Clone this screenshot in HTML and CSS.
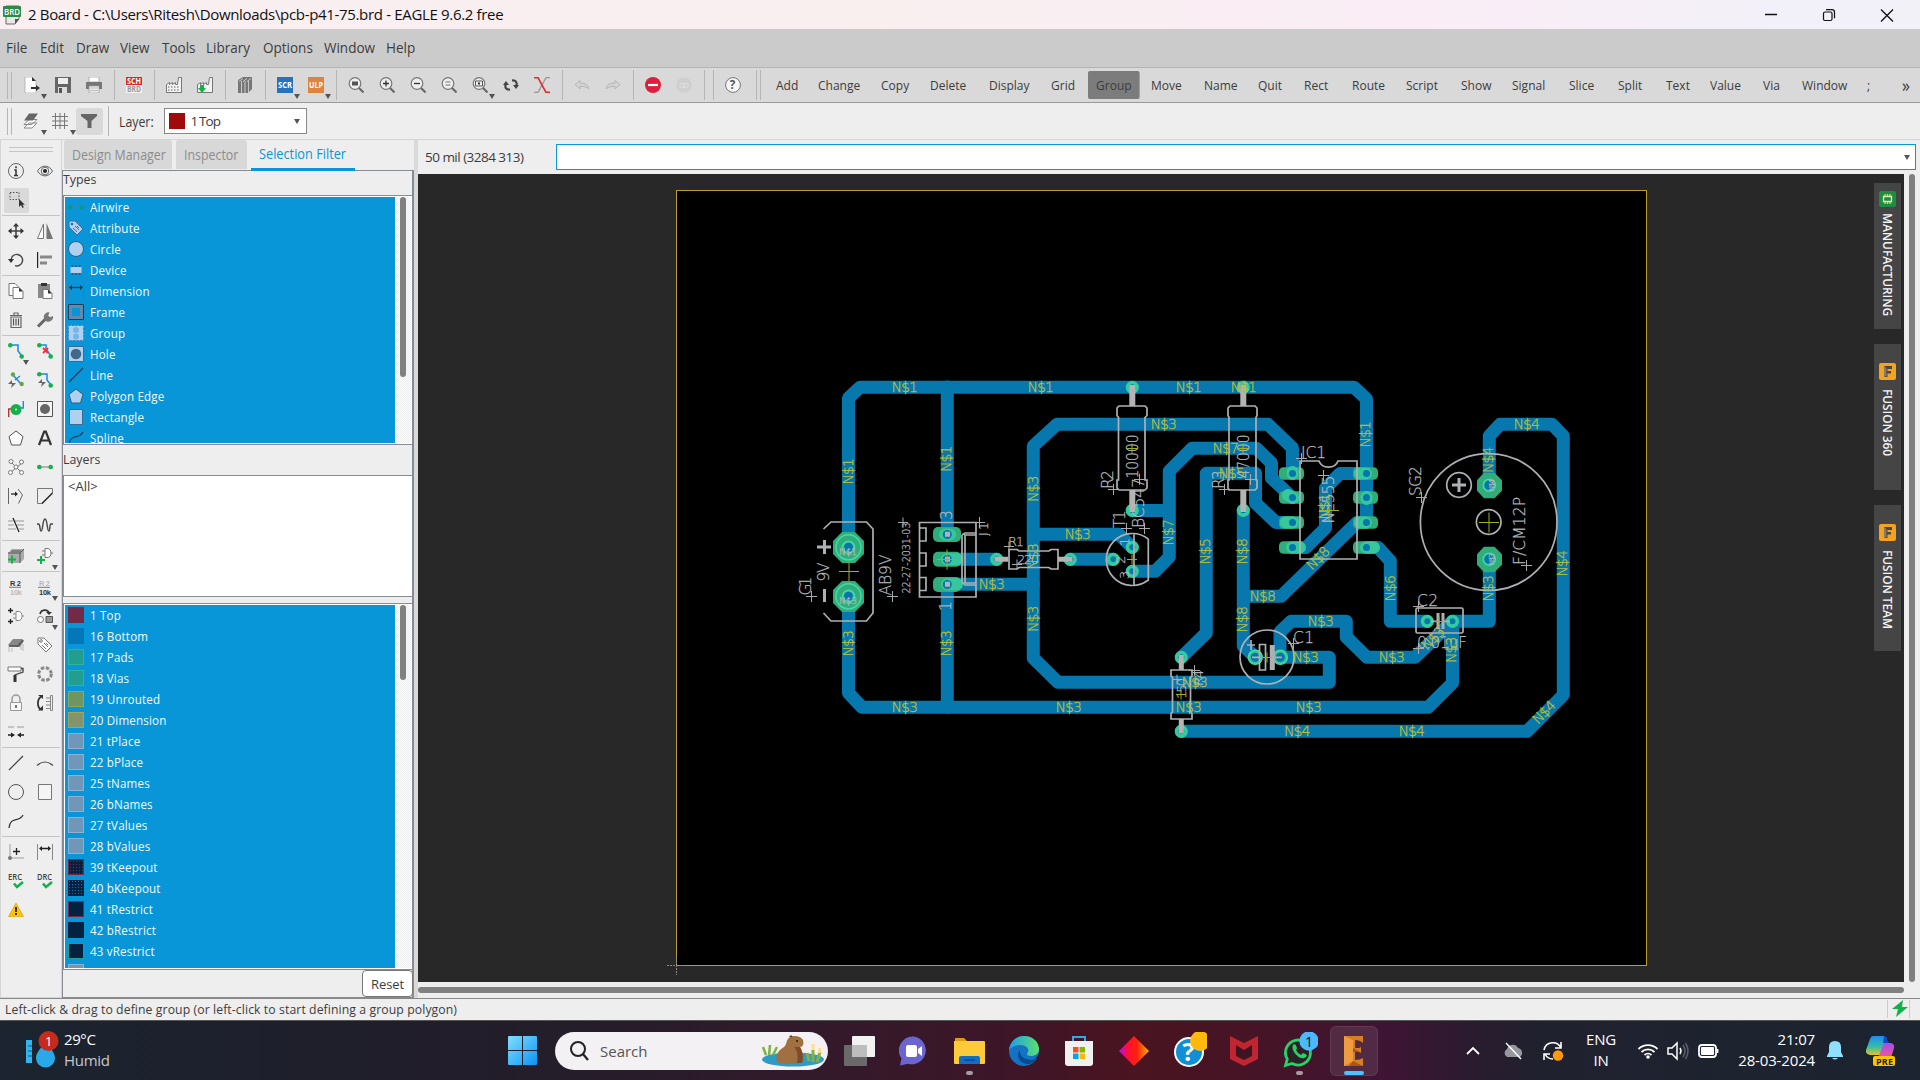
FILE: index.html
```html
<!DOCTYPE html>
<html lang="en">
<head>
<meta charset="utf-8">
<title>2 Board - EAGLE 9.6.2 free</title>
<link rel="stylesheet" href="styles.css">
</head>
<body>
<div class="app">

<header class="titlebar">
  <svg class="app-icon" width="19" height="20" viewBox="0 0 19 20"><path d="M3 1h13v13l-4 5H3z" fill="#e8e8e8" stroke="#666"/><path d="M12 19v-5h4z" fill="#555"/><rect width="18" height="11" y="1" rx="1" fill="#2b8a49"/><text x="1" y="10" font-size="9" font-weight="600" fill="#fff" textLength="16" lengthAdjust="spacingAndGlyphs">BRD</text></svg>
  <span class="title">2 Board - C:\Users\Ritesh\Downloads\pcb-p41-75.brd - EAGLE 9.6.2 free</span>
  <svg class="winctl" width="140" height="20" viewBox="1760 4 140 20"><path d="M1765 13.500h12M1881 8.500l12 12M1893 8.500l-12 12" stroke="#111" stroke-width="1.300" fill="none"/><rect x="1823.500" y="11" width="8.500" height="8.500" rx="1.500" fill="none" stroke="#111" stroke-width="1.200"/><path d="M1826 8.700h6a2.500 2.500 0 0 1 2.500 2.500v6" fill="none" stroke="#111" stroke-width="1.200"/></svg>
</header>

<nav class="menubar"><span>File</span><span>Edit</span><span>Draw</span><span>View</span><span>Tools</span><span>Library</span><span>Options</span><span>Window</span><span>Help</span></nav>

<div class="toolbar">
  <i class="handle"></i>
  <span class="tb drop"><svg viewBox="0 0 16 16"><path d="M1 0h7l4 4v12H1z" fill="#fff" stroke="#999" stroke-width=".6"/><path d="M8 0v4h4z" fill="#333"/><path d="M7 11h6" stroke="#333" stroke-width="2"/><path d="M12 8l4 3-4 3z" fill="#333"/></svg></span>
  <span class="tb"><svg viewBox="0 0 16 16"><path d="M0 0h16v16H0z" fill="#666"/><path d="M3 1h10v6H3z" fill="#eee"/><path d="M3 10h9v6H3z" fill="#ddd"/><path d="M4 11h3v5H4z" fill="#555"/></svg></span>
  <span class="tb"><svg viewBox="0 0 16 16"><path d="M3 0h10v5H3z" fill="#fff" stroke="#999" stroke-width=".7"/><path d="M0 5h16v7H0z" fill="#777"/><path d="M3 9h10v7H3z" fill="#eee" stroke="#999" stroke-width=".7"/><path d="M4 11h8M4 13.500h8" stroke="#bbb"/></svg></span>
  <i class="sep"></i>
  <span class="tb"><svg viewBox="0 0 16 16"><path d="M0 0h16v8H0z" fill="#e02323"/><path d="M0 8h16v8H0z" fill="#f3f3f3"/><text x="1" y="7" font-size="8" font-weight="700" fill="#fff" textLength="14" lengthAdjust="spacingAndGlyphs">SCH</text><text x="1" y="15" font-size="8" font-weight="700" fill="#999" textLength="14" lengthAdjust="spacingAndGlyphs">BRD</text></svg></span>
  <i class="sep"></i>
  <span class="tb"><svg viewBox="0 0 16 16"><path d="M.5 15.500v-8l3-2v2l3-2v2l3-2v2h2l1-7h3v15z" fill="#f2f2f2" stroke="#777"/><path d="M2 10h1.500M5 10h1.500M8 10h1.500M11 10h1.500M2 13h1.500M5 13h1.500M8 13h1.500M11 13h1.500" stroke="#666"/></svg></span>
  <span class="tb"><svg viewBox="0 0 16 16"><path d="M.5 15.500v-8l3-2v2l3-2v2l3-2v2h2l1-7h3v15z" fill="#f2f2f2" stroke="#777"/><path d="M3 8h4v3h2l-4 5-4-5h2z" fill="#14b14b"/></svg></span>
  <i class="sep"></i>
  <span class="tb"><svg viewBox="0 0 16 16"><path d="M1 3l5-3h9v12l-4 4H1z" fill="#777"/><path d="M4.500 4v12M8 4v12M11.500 4v12M2 4.500l4-3M6 4.500l4-3M10 4.500l4-3" stroke="#ddd" stroke-width=".8"/></svg></span>
  <i class="sep"></i>
  <span class="tb drop"><svg viewBox="0 0 16 16"><path d="M0 0h16v16H0z" fill="#2872bd"/><text x="1" y="11" font-size="9" font-weight="700" fill="#fff" textLength="14" lengthAdjust="spacingAndGlyphs">SCR</text></svg></span>
  <span class="tb drop"><svg viewBox="0 0 16 16"><path d="M0 0h16v16H0z" fill="#dc8440"/><text x="1" y="11" font-size="9" font-weight="700" fill="#fff" textLength="14" lengthAdjust="spacingAndGlyphs">ULP</text></svg></span>
  <i class="sep"></i>
  <span class="tb"><svg viewBox="0 0 16 16"><circle cx="7" cy="6.500" r="5.800" class="lens"/><path d="M11 11l4.500 4.500" class="grip"/><path d="M4 4.500h6v4H4z" fill="#555"/></svg></span>
  <span class="tb"><svg viewBox="0 0 16 16"><circle cx="7" cy="6.500" r="5.800" class="lens"/><path d="M11 11l4.500 4.500" class="grip"/><path d="M4 6.500h6M7 3.500v6" stroke="#333" stroke-width="1.300"/></svg></span>
  <span class="tb"><svg viewBox="0 0 16 16"><circle cx="7" cy="6.500" r="5.800" class="lens"/><path d="M11 11l4.500 4.500" class="grip"/><path d="M4 6.500h6" stroke="#333" stroke-width="1.300"/></svg></span>
  <span class="tb"><svg viewBox="0 0 16 16"><circle cx="7" cy="6.500" r="5.800" class="lens"/><path d="M11 11l4.500 4.500" class="grip"/><path d="M4.500 5h5M4.500 8h5" stroke="#777" stroke-width="1.200"/></svg></span>
  <span class="tb drop"><svg viewBox="0 0 16 16"><circle cx="7" cy="6.500" r="5.800" class="lens"/><path d="M11 11l4.500 4.500" class="grip"/><path d="M3.500 4h7v5h-7z" fill="none" stroke="#555"/><path d="M6 5.500h2v2H6z" fill="#333"/></svg></span>
  <span class="tb"><svg viewBox="0 0 16 16"><path d="M9 3.500c4-.5 5 2 4.500 5M7 12.500c-4 .5-5-2-4.500-5" fill="none" stroke="#444" stroke-width="2.200"/><path d="M10 8h6l-3 4zM0 8h6L3 4z" fill="#444"/></svg></span>
  <span class="tb"><svg viewBox="0 0 16 16"><path d="M16 .7h-4L4 15.300H0" fill="none" stroke="#999" stroke-width="1.300"/><path d="M0 .7h4l8 14.600h4" fill="none" stroke="#e22b2b" stroke-width="1.700"/></svg></span>
  <i class="sep"></i>
  <span class="tb"><svg viewBox="0 0 16 16"><path d="M1 7.500l5-4v2.500c6 0 8 2 9 6-2-2-5-3-9-2.500v2.500z" fill="#d3d3d3" stroke="#b5b5b5"/></svg></span>
  <span class="tb"><svg viewBox="0 0 16 16"><path d="M15 7.500l-5-4v2.500c-6 0-8 2-9 6 2-2 5-3 9-2.500v2.500z" fill="#d3d3d3" stroke="#b5b5b5"/></svg></span>
  <i class="sep"></i>
  <span class="tb"><svg viewBox="0 0 16 16"><circle cx="8" cy="8" r="8" fill="#de1f3c"/><path d="M3 8h10" stroke="#fff" stroke-width="2.200"/></svg></span>
  <span class="tb"><svg viewBox="0 0 16 16"><circle cx="8" cy="8" r="7.800" fill="#cfcfcf"/><text x="3" y="11" font-size="8" fill="#e4e4e4" textLength="10">GO</text></svg></span>
  <i class="sep"></i><i class="sep"></i>
  <span class="tb"><svg viewBox="0 0 16 16"><circle cx="8" cy="8" r="7.400" fill="#f6f6f6" stroke="#777"/><text x="4.700" y="12" font-size="11.500" font-weight="700" fill="#555">?</text></svg></span>
  <i class="handle h2"></i>
  <div class="cmds"><span>Add</span><span>Change</span><span>Copy</span><span>Delete</span><span>Display</span><span>Grid</span><span class="on">Group</span><span>Move</span><span>Name</span><span>Quit</span><span>Rect</span><span>Route</span><span>Script</span><span>Show</span><span>Signal</span><span>Slice</span><span>Split</span><span>Text</span><span>Value</span><span>Via</span><span>Window</span><span>;</span><span class="more">»</span></div>
</div>

<div class="toolbar2">
  <i class="handle"></i>
  <span class="tb drop"><svg viewBox="0 0 16 16"><path d="M1 15h8l5-5H6zM1 11.500h8l5-5H6z" fill="#fff" stroke="#888"/><path d="M1 7.500h9l5-7H6z" fill="#666"/></svg></span>
  <span class="tb drop"><svg viewBox="0 0 16 16"><path d="M0 3.500h16M0 8h16M0 12.500h16M3.500 0v16M8 0v16M12.500 0v16" stroke="#777"/></svg></span>
  <span class="tb pressed"><svg viewBox="0 0 16 16"><path d="M0 1h16v2l-5.500 5v7h-4V8L0 3z" fill="#666"/></svg></span>
  <i class="sep"></i>
  <label>Layer:</label>
  <div class="combo"><i></i><span>1 Top</span><b></b></div>
</div>

<main class="main">
<aside class="palette">
  <div class="grip-lines"></div>
  <div class="prow">
    <svg viewBox="0 0 16 16"><circle cx="8" cy="8" r="7.500" fill="none" stroke="#666"/><path d="M8 3.300v2M6.300 7H8v5.500M6 12.500h4" fill="none" stroke="#333" stroke-width="1.500"/></svg>
    <svg viewBox="0 0 16 16"><path d="M.5 8C4 1.500 12 1.500 15.500 8 12 14.500 4 14.500.5 8z" fill="none" stroke="#666"/><circle cx="8" cy="8" r="3.800" fill="none" stroke="#666"/><circle cx="8" cy="8" r="2" fill="#222"/></svg>
  </div>
  <div class="prow"><svg class="sel" viewBox="0 0 16 16"><path d="M1 .500h9v7H1z" fill="none" stroke="#555" stroke-dasharray="1.500 1.500"/><path d="M10 7v8l2-2 1.500 3 1.300-.8-1.300-2.400h2.300z" fill="#333"/></svg></div>
  <hr>
  <div class="prow">
    <svg viewBox="0 0 16 16"><path d="M8 2v12M2 8h12" stroke="#444" stroke-width="1.600"/><path d="M8 0l3 3.500H5zM8 16l3-3.500H5zM0 8l3.500-3v6zM16 8l-3.500-3v6z" fill="#333"/></svg>
    <svg viewBox="0 0 16 16"><path d="M6.500 1v14.500H.500z" fill="#fff" stroke="#777"/><path d="M9.500 0v16H16z" fill="#777"/></svg>
  </div>
  <div class="prow">
    <svg viewBox="0 0 16 16"><path d="M3 8a5.800 5.800 0 1 1 4 5.700" fill="none" stroke="#444" stroke-width="1.400"/><path d="M0 7h6l-3 4z" fill="#333"/></svg>
    <svg viewBox="0 0 16 16"><path d="M.6 0v16" stroke="#222" stroke-width="1.200"/><path d="M3 5h12M3 11h7" stroke="#888" stroke-width="3"/></svg>
  </div>
  <hr>
  <div class="prow">
    <svg viewBox="0 0 16 16"><path d="M1 .500h6l3 3v9H1z" fill="#fff" stroke="#777"/><path d="M5 4.500h6l4 4v7H5z" fill="#fff" stroke="#777"/><path d="M11 4.500v4h4z" fill="#333"/></svg>
    <svg viewBox="0 0 16 16"><path d="M1 1h12v14H1z" fill="#888"/><path d="M4 0h6v3H4z" fill="#333"/><path d="M6 6.500h5l4 4v5H6z" fill="#fff" stroke="#777"/><path d="M11 6.500v4h4z" fill="#333"/></svg>
  </div>
  <div class="prow">
    <svg viewBox="0 0 16 16"><path d="M2 3.500h12M6 3V1h4v2M3 5v10.500h10V5z" fill="none" stroke="#666" stroke-width="1.200"/><path d="M5.500 6.500v7M8 6.500v7M10.500 6.500v7" stroke="#555" stroke-width="1.200"/></svg>
    <svg viewBox="0 0 16 16"><path d="M1 14.500L9 6.500" stroke="#666" stroke-width="3"/><path d="M16 4l-3 1.200-1.800-1.700L12.500.5a4.700 4.700 0 1 0 3.500 3.500z" fill="#777"/></svg>
  </div>
  <hr>
  <div class="prow">
    <svg class="dd" viewBox="0 0 16 16"><path d="M2 2h8v6l4 5" fill="none" stroke="#168be6" stroke-width="1.500"/><circle cx="2.300" cy="2.300" r="2.300" fill="#14b04a"/><circle cx="13.700" cy="13.500" r="2.300" fill="#14b04a"/></svg>
    <svg viewBox="0 0 16 16"><path d="M2 2h7v4l5 7" fill="none" stroke="#168be6" stroke-width="1.500"/><circle cx="2.300" cy="2.300" r="2.300" fill="#14b04a"/><circle cx="13.700" cy="13.500" r="2.300" fill="#14b04a"/><path d="M6 5l5 5M11 5l-5 5" stroke="#f0303c" stroke-width="1.800"/></svg>
  </div>
  <div class="prow">
    <svg viewBox="0 0 16 16"><path d="M5 3l8 9M7 8l5-4" stroke="#168be6" stroke-width="1.500"/><circle cx="5" cy="2.500" r="2.200" fill="#6ba348"/><circle cx="13.700" cy="12" r="2.200" fill="#6ba348"/><path d="M4 8L0 12h4l-1 4 5-5H4z" fill="#666"/></svg>
    <svg viewBox="0 0 16 16"><path d="M2 2h8v6l4 5" fill="none" stroke="#168be6" stroke-width="1.500"/><circle cx="2.300" cy="2.300" r="2.300" fill="#14b04a"/><circle cx="13.700" cy="13.500" r="2.300" fill="#14b04a"/><path d="M5 7L1 11h4l-1 4 5-5H5z" fill="#666"/></svg>
  </div>
  <div class="prow">
    <svg viewBox="0 0 16 16"><path d="M.7 16V8H3" fill="none" stroke="#b33" stroke-width="1.400"/><path d="M15.300 0v7H13" fill="none" stroke="#168be6" stroke-width="1.400"/><circle cx="8" cy="8.500" r="5.500" fill="#14b04a"/><circle cx="8" cy="8.500" r="1" fill="#fff"/></svg>
    <svg viewBox="0 0 16 16"><path d="M.5 .500h15v15H.500z" fill="#f5f5f5" stroke="#555"/><circle cx="8" cy="8" r="5" fill="#666"/></svg>
  </div>
  <div class="prow">
    <svg viewBox="0 0 16 16"><path d="M8 1l7 5.500-2.500 8.500h-9L1 6.500z" fill="#fafafa" stroke="#555"/></svg>
    <svg viewBox="0 0 16 16"><path d="M2 15L7.200 1.500h1.600L14 15M4 10.500h8" fill="none" stroke="#333" stroke-width="2.200"/></svg>
  </div>
  <div class="prow">
    <svg viewBox="0 0 16 16"><path d="M2 2l12 12M14 4L2 14" stroke="#777"/><g fill="#fff" stroke="#777"><circle cx="3" cy="2.500" r="2"/><circle cx="13.500" cy="3" r="2"/><circle cx="8" cy="8" r="2"/><circle cx="2.500" cy="13.500" r="2"/><circle cx="13.500" cy="13.500" r="2"/></g></svg>
    <svg viewBox="0 0 16 16"><path d="M2 8h12" stroke="#999" stroke-width="1.400"/><circle cx="2.300" cy="8" r="2.300" fill="#14b04a"/><circle cx="13.700" cy="8" r="2.300" fill="#14b04a"/></svg>
  </div>
  <div class="prow">
    <svg viewBox="0 0 16 16"><path d="M.5 0v16M10 1l4.500 6-4 8.500" fill="none" stroke="#666"/><path d="M3 6h5" stroke="#222" stroke-width="1.300"/><path d="M7 3.500l3 2.500-3 2.500z" fill="#222"/></svg>
    <svg viewBox="0 0 16 16"><path d="M15.500 5V.500H.500v15h5" fill="none" stroke="#777"/><path d="M5 15.500L15.500 5" stroke="#222" stroke-width="1.500"/></svg>
  </div>
  <div class="prow">
    <svg viewBox="0 0 16 16"><path d="M0 4h5M7 4h9M0 8h6M9 8h7M0 12h8M11 12h5" stroke="#999"/><path d="M5 1l6 14" stroke="#222" stroke-width="1.300"/></svg>
    <svg viewBox="0 0 16 16"><path d="M0 7h1.500c2 0 1 7 2.700 7S5.500 2 8 2s2 12 3.800 12S12 7 14 7h2" fill="none" stroke="#444" stroke-width="1.400"/></svg>
  </div>
  <hr>
  <div class="prow">
    <svg viewBox="0 0 16 16"><path d="M0 5l4-4h12v10l-4 4H0z" fill="#aaa"/><path d="M0 5h12v10M12 5l4-4M3 3h10" stroke="#555" fill="none"/><path d="M4 7.500v8M0 11.500h8" stroke="#14b04a" stroke-width="2"/></svg>
    <svg class="dd" viewBox="0 0 16 16"><path d="M8 .500h2q4 0 4 4.500t-4 4.500H8zM5 3h3M5 7h3M14 5h2" fill="#fff" stroke="#777"/><path d="M4 8v8M0 12h8" stroke="#14b04a" stroke-width="2"/></svg>
  </div>
  <hr>
  <div class="prow">
    <svg viewBox="0 0 16 16"><text class="ic" x="2" y="6.500" textLength="11">R2</text><path d="M1 8.300h12" stroke="#777"/><text class="ic dim" x="2" y="15.500" textLength="12">10k</text></svg>
    <svg class="dd" viewBox="0 0 16 16"><text class="ic dim" x="2" y="6.500" textLength="11">R2</text><path d="M1 8.300h12" stroke="#777"/><text class="ic" x="2" y="15.500" textLength="12">10k</text></svg>
  </div>
  <div class="prow">
    <svg viewBox="0 0 16 16"><path d="M2.500 0v5M0 2.500h5M2.500 11v5M0 13.500h5" stroke="#222" stroke-width="1.300"/><path d="M8 3.500h2q4 0 4 4.500t-4 4.500H8zM5 6h3M5 10h3M14 8h2" fill="#fff" stroke="#888"/></svg>
    <svg class="dd" viewBox="0 0 16 16"><circle cx="3.500" cy="11.500" r="3" fill="#fff" stroke="#777"/><path d="M9 8.500h6.500v6H9z" fill="#999" stroke="#555"/><path d="M3 6c1-5 8-5 9-1" fill="none" stroke="#333" stroke-width="1.600"/><path d="M9 4h6l-3 3z" fill="#333"/></svg>
  </div>
  <div class="prow">
    <svg viewBox="0 0 16 16"><path d="M0 8l5-6h9l2 2-4 6H3z" fill="#888"/><path d="M1 9v6M4 11v4M13 9v4M15 7v7" stroke="#bbb"/><path d="M1 9h9l5-6" fill="none" stroke="#555" stroke-width="1.500"/></svg>
    <svg viewBox="0 0 16 16"><path d="M1 1h6l8 8-6 6L1 7z" fill="#fff" stroke="#777"/><circle cx="4" cy="4" r="1.300" fill="none" stroke="#777"/><path d="M7 6l4 4M5 8l4 4M9 6l2 2" stroke="#777"/></svg>
  </div>
  <div class="prow">
    <svg viewBox="0 0 16 16"><path d="M0 1h13v4H0z" fill="#fff" stroke="#777"/><path d="M13 2.500h2V6L7 9v3" fill="none" stroke="#444" stroke-width="1.300"/><path d="M7 9v7" stroke="#333" stroke-width="3"/></svg>
    <svg viewBox="0 0 16 16"><circle cx="8" cy="8" r="6.300" fill="none" stroke="#888" stroke-width="3" stroke-dasharray="3.400 1.550"/></svg>
  </div>
  <div class="prow">
    <svg viewBox="0 0 16 16"><path d="M4 7V4a4 4 0 0 1 8 0v3" fill="none" stroke="#999" stroke-width="1.500"/><path d="M2.500 7.500h11v8h-11z" fill="#f7f7f7" stroke="#999"/><path d="M8 10v3" stroke="#777" stroke-width="2"/></svg>
    <svg viewBox="0 0 16 16"><path d="M4 2C0 4 0 12 3.500 14" fill="none" stroke="#333" stroke-width="1.800"/><path d="M1 0h5v4zM1 15.500h5v-5z" fill="#333"/><path d="M13.500 .500h2v15h-2zM9 3h4M9 6.500h4M9 10h4M9 13.500h4" fill="none" stroke="#888"/></svg>
  </div>
  <div class="prow"><svg viewBox="0 0 16 16"><path d="M0 3h6M9 3h7" stroke="#999"/><path d="M0 11h4M12 11h4" stroke="#222" stroke-width="1.300"/><path d="M3 8.500l4 2.500-4 2.500zM13 8.500L9 11l4 2.500z" fill="#222"/></svg></div>
  <hr>
  <div class="prow">
    <svg viewBox="0 0 16 16"><path d="M1 15L15 1" stroke="#444" stroke-width="1.200"/></svg>
    <svg viewBox="0 0 16 16"><path d="M0 10.500Q8 3.500 16 10.500" fill="none" stroke="#444" stroke-width="1.200"/></svg>
  </div>
  <div class="prow">
    <svg viewBox="0 0 16 16"><circle cx="8" cy="8" r="7.500" fill="none" stroke="#555"/></svg>
    <svg viewBox="0 0 16 16"><path d="M1.500 .500h13v15h-13z" fill="#f5f5f5" stroke="#777"/></svg>
  </div>
  <div class="prow"><svg viewBox="0 0 16 16"><path d="M1 15C2 3 11 10 15 2" fill="none" stroke="#333" stroke-width="1.300"/></svg></div>
  <hr>
  <div class="prow">
    <svg viewBox="0 0 16 16"><path d="M2 0v14h14" fill="none" stroke="#bbb" stroke-width="1.500"/><circle cx="2" cy="14" r="2" fill="#777"/><path d="M8.500 4v7M5 7.500h7" stroke="#222" stroke-width="1.300"/></svg>
    <svg viewBox="0 0 16 16"><path d="M.5 0v16M15.500 0v16" stroke="#888"/><path d="M3 4.500h10" stroke="#222" stroke-width="1.500"/><path d="M2 4.500L5 2v5zM14 4.500L11 2v5z" fill="#222"/></svg>
  </div>
  <div class="prow">
    <svg viewBox="0 0 16 16"><text class="ic mid" x="0" y="7" textLength="14" lengthAdjust="spacingAndGlyphs">ERC</text><path d="M6 10.500l3 3.500 6-5" fill="none" stroke="#14b04a" stroke-width="2.600"/></svg>
    <svg viewBox="0 0 16 16"><text class="ic mid" x="0" y="7" textLength="15" lengthAdjust="spacingAndGlyphs">DRC</text><path d="M6 10.500l3 3.500 6-5" fill="none" stroke="#14b04a" stroke-width="2.600"/></svg>
  </div>
  <div class="prow"><svg viewBox="0 0 16 16"><path d="M8 1l7.500 13.500H.500z" fill="#fdc30a" stroke="#d99c00" stroke-width=".6"/><path d="M8 5v5M8 11v2" stroke="#222" stroke-width="1.800"/></svg></div>
</aside>

<section class="panel">
  <div class="tabs"><span class="t1"><b>Design Manager</b></span><span class="t2"><b>Inspector</b></span><span class="t3 active"><b>Selection Filter</b></span></div>
  <div class="panel-body">
    <h4 class="types">Types</h4>
    <div class="list list1">
      <ul>
        <li><svg viewBox="0 0 16 16"><path d="M2 8h12" stroke="#4a7fa5"/><circle cx="2.300" cy="8" r="2.300" fill="#0c9a83"/><circle cx="13.700" cy="8" r="2.300" fill="#0c9a83"/></svg><b>Airwire</b></li>
        <li><svg viewBox="0 0 16 16"><path d="M1 1h6l8 8-6 6L1 7z" fill="#b0d0ef" stroke="#3e6c92"/><circle cx="4" cy="4" r="1.300" fill="#2b6c9c"/><path d="M7 6l4 4M5 8l4 4M9 6l2 2" stroke="#3e6c92"/></svg><b>Attribute</b></li>
        <li><svg viewBox="0 0 16 16"><circle cx="8" cy="8" r="7.500" fill="#b0d0ef" stroke="#2f5d80"/></svg><b>Circle</b></li>
        <li><svg viewBox="0 0 16 16"><path d="M4.500 3v10M8 3v10M11.500 3v10" stroke="#355f80" stroke-width="2"/><path d="M2.500 5h11v6h-11z" fill="#b0d0ef"/></svg><b>Device</b></li>
        <li><svg viewBox="0 0 16 16"><path d="M.5 0v16M15.500 0v16" stroke="#4078a0"/><path d="M3 4.500h10" stroke="#123c5c" stroke-width="1.300"/><path d="M1 4.500L4 2v5zM15 4.500L12 2v5z" fill="#123c5c"/></svg><b>Dimension</b></li>
        <li><svg viewBox="0 0 16 16"><path d="M2.200 2.200h11.600v11.600H2.200z" fill="none" stroke="#6788aa" stroke-width="3.500"/><path d="M.5 .500h15v15H.500z" fill="none" stroke="#173f60"/></svg><b>Frame</b></li>
        <li><svg viewBox="0 0 16 16"><path d="M.5 .500h15v15H.500z" fill="#b0d0ef" stroke="#3e7fb5" stroke-dasharray="2 1.500"/><circle cx="8" cy="5" r="3" fill="#78b5e6"/><circle cx="8" cy="11.500" r="3" fill="#78b5e6"/></svg><b>Group</b></li>
        <li><svg viewBox="0 0 16 16"><path d="M.5 .500h15v15H.500z" fill="#b0d0ef" stroke="#3a6b92"/><circle cx="8" cy="8" r="5.300" fill="#44688a"/></svg><b>Hole</b></li>
        <li><svg viewBox="0 0 16 16"><path d="M1 15L15 1" stroke="#123c5c" stroke-width="1.200"/></svg><b>Line</b></li>
        <li><svg viewBox="0 0 16 16"><path d="M8 1l7 5.500-2.500 8.500h-9L1 6.500z" fill="#b0d0ef" stroke="#2f5d80"/></svg><b>Polygon Edge</b></li>
        <li><svg viewBox="0 0 16 16"><path d="M1.500 .500h13v15h-13z" fill="#b0d0ef" stroke="#3a6b92"/></svg><b>Rectangle</b></li>
        <li><svg viewBox="0 0 16 16"><path d="M1 15C2 3 11 10 15 2" fill="none" stroke="#123c5c" stroke-width="1.300"/></svg><b>Spline</b></li>
      </ul>
      <div class="scroll"><i></i></div>
    </div>
    <h4 class="layers">Layers</h4>
    <div class="allbox">&lt;All&gt;</div>
    <div class="list list2">
      <ul>
        <li><i class="sw l1"></i><b>1 Top</b></li>
        <li><i class="sw l16"></i><b>16 Bottom</b></li>
        <li><i class="sw l17"></i><b>17 Pads</b></li>
        <li><i class="sw l17"></i><b>18 Vias</b></li>
        <li><i class="sw l19"></i><b>19 Unrouted</b></li>
        <li><i class="sw l20"></i><b>20 Dimension</b></li>
        <li><i class="sw l21"></i><b>21 tPlace</b></li>
        <li><i class="sw l21"></i><b>22 bPlace</b></li>
        <li><i class="sw l21"></i><b>25 tNames</b></li>
        <li><i class="sw l21"></i><b>26 bNames</b></li>
        <li><i class="sw l21"></i><b>27 tValues</b></li>
        <li><i class="sw l21"></i><b>28 bValues</b></li>
        <li><i class="sw l39"></i><b>39 tKeepout</b></li>
        <li><i class="sw l40"></i><b>40 bKeepout</b></li>
        <li><i class="sw l41"></i><b>41 tRestrict</b></li>
        <li><i class="sw l42"></i><b>42 bRestrict</b></li>
        <li><i class="sw l43"></i><b>43 vRestrict</b></li>
        <li><i class="sw l21"></i></li>
      </ul>
      <div class="scroll"><i></i></div>
    </div>
    <button class="reset">Reset</button>
  </div>
</section>

<section class="work">
  <div class="cmdrow"><span class="coord">50 mil (3284 313)</span><div class="cmdline"><b></b></div></div>
  <div class="canvas-row">
    <div class="canvas">
    <svg class="pcb" width="1486" height="808" viewBox="418 174 1486 808">
      <rect x="676.500" y="190.500" width="970" height="775" fill="#000" stroke="#c39a2c"/>
      <path d="M667 965.500h19M676.500 956v19" stroke="#8a8a8a" stroke-dasharray="2 1"/>
      <g class="trace">
        <path d="M848.500 547V398L860 387.300H1354L1366.500 399V522"/>
        <path d="M947.300 387V534M947.300 584V707"/>
        <path d="M848.500 596V693L862 707.300H1428L1452.500 683V621.300H1489.300V559"/>
        <path d="M1292.500 473.500V448L1268 424.300H1057L1033.300 446V658L1058 682.300H1329.300V657.300H1280V632L1291 621.300H1346.300V637L1367 657.300H1415L1452.300 621.300"/>
        <path d="M1033.300 534.300H1119L1132.300 547.300M947 584.300H1033.300M947 559.300H996.700M1070.300 559.300H1113.300"/>
        <path d="M1132.300 510.500H1169.300M1132.300 571.300H1155L1169.300 557V471L1192 448.300H1256.500L1271.500 463V478L1292 497.500"/>
        <path d="M1181.300 657.300L1206.300 633V473.300H1255.500V503L1276 522.500H1292"/>
        <path d="M1243.300 510.500V646L1255.300 657.300M1243.300 596.300H1281L1357 522.500H1366"/>
        <path d="M1366.500 473.500H1340L1325.500 488V528L1306 547.500H1292"/>
        <path d="M1366 547.500H1378L1390.300 561V621.300H1427"/>
        <path d="M1489.300 485.300V436L1500 424.300H1552L1563.300 436V695L1527 731.300H1181.300"/>
      </g>
      <g class="oct">
        <path d="M842 532h13l9 9v13l-9 9h-13l-9-9v-13z"/>
        <path d="M842 581h13l9 9v13l-9 9h-13l-9-9v-13z"/>
        <path d="M1484 472.800h10.500l7.500 7.500v10.500l-7.500 7.500H1484l-7-7.500v-10.500z"/>
        <path d="M1484 546.800h10.500l7.500 7.500v10.500l-7.500 7.500H1484l-7-7.500v-10.500z"/>
      </g>
      <g class="slot">
        <rect x="933" y="527" width="28" height="15" rx="5"/><rect x="933" y="551.800" width="28" height="15" rx="5"/><rect x="933" y="577" width="28" height="15" rx="5"/>
        <rect x="1279" y="467.300" width="25" height="12.500" rx="4.500"/><rect x="1279" y="491.300" width="25" height="12.500" rx="4.500"/><rect x="1279" y="516.300" width="25" height="12.500" rx="4.500"/><rect x="1279" y="541.300" width="25" height="12.500" rx="4.500"/>
        <rect x="1353" y="467.300" width="25" height="12.500" rx="4.500"/><rect x="1353" y="491.300" width="25" height="12.500" rx="4.500"/><rect x="1353" y="516.300" width="25" height="12.500" rx="4.500"/><rect x="1353" y="541.300" width="25" height="12.500" rx="4.500"/>
      </g>
      <g class="slothi">
        <path d="M945 534.500h5M947 559.300h10M947 584.300h10M1292.500 472v2M1288 495l5 3M1286 522.500h7M1292 547.500h8M1360 473.500h6M1366.500 497v2M1360 522.500h6M1366 547.500h8"/>
      </g>
      <g class="ring">
        <circle cx="848.500" cy="547.300" r="12.500" fill="none"/><circle cx="848.500" cy="596.300" r="12.500" fill="none"/>
        <circle cx="848.500" cy="547.300" r="6"/><circle cx="848.500" cy="596.300" r="6"/>
        <circle cx="1489.300" cy="485.300" r="6"/><circle cx="1489.300" cy="559.300" r="6"/>
        <circle cx="1255.300" cy="657.300" r="7"/><circle cx="1280.300" cy="657.300" r="7"/>
      </g>
      <g class="via">
        <circle cx="1132.300" cy="387.300" r="4.800"/><circle cx="1132.300" cy="510.300" r="4.800"/><circle cx="1243.300" cy="387.300" r="4.800"/><circle cx="1243.300" cy="510.300" r="4.800"/>
        <circle cx="996.700" cy="559.300" r="4.800"/><circle cx="1070.300" cy="559.300" r="4.800"/><circle cx="1113.300" cy="559.300" r="4.800"/><circle cx="1132.300" cy="547.300" r="4.800"/><circle cx="1132.300" cy="571.300" r="4.800"/>
        <circle cx="1181.300" cy="657.300" r="4.800"/><circle cx="1181.300" cy="731.300" r="4.800"/><circle cx="1427.300" cy="621.300" r="4.800"/><circle cx="1452.500" cy="621.300" r="4.800"/>
      </g>
      <g class="drill">
        <circle cx="848.500" cy="547.300" r="4.500"/><circle cx="848.500" cy="596.300" r="4.500"/><circle cx="947.300" cy="534.500" r="4.500"/><circle cx="947.300" cy="559.300" r="4.500"/><circle cx="947.300" cy="584.500" r="4.500"/>
        <circle cx="1292.500" cy="473.500" r="3.500"/><circle cx="1292.500" cy="497.500" r="3.500"/><circle cx="1292.500" cy="522.500" r="3.500"/><circle cx="1292.500" cy="547.500" r="3.500"/>
        <circle cx="1366.500" cy="473.500" r="3.500"/><circle cx="1366.500" cy="497.500" r="3.500"/><circle cx="1366.500" cy="522.500" r="3.500"/><circle cx="1366.500" cy="547.500" r="3.500"/>
        <circle cx="1489.300" cy="485.300" r="5"/><circle cx="1489.300" cy="559.300" r="5"/><circle cx="1255.300" cy="657.300" r="4.500"/><circle cx="1280.300" cy="657.300" r="4.500"/>
      </g>
      <g class="lead">
        <path d="M1132.300 385V406M1132.300 490V512M1243.300 385V406M1243.300 490V512"/>
        <path class="thin" d="M994.500 559.300H1008M1058 559.300H1072.500M1181.300 655V670M1181.300 719V733.500"/>
        <path class="thin" d="M945 534.300h5M945 559.300h5M945 584.300h5"/>
      </g>
      <g class="silk">
        <path d="M823.500 529L831 522H866.500L873 529V613L866.500 621H831L823.500 613"/>
        <path class="bold" d="M817 547h14M824.500 540v14M824.500 589v13"/>
        <path d="M919.500 522.500H976V597H919.500zM920 528h6v13h-6M920 553h6v13h-6M920 577.500h6v13h-6M976 535H965V583H976M962 535v47l3 3h11M962 535l3-2h11" />
        <path d="M1009 549.500h8l2 1.500h30l2-1.500h7V569h-7l-2-1.500h-30l-2 1.500h-8z"/>
        <path d="M1119 406h26l2 2v7.500l-2 2V480h2v8l-2 2h-26l-2-2v-8h1.500V417.500L1117 415.500V408z"/>
        <path d="M1230 406h25l2 2v7.500l-1 2V480h1v8l-2 2h-26l-1-2v-8h1V417.500l-1-2V408z"/>
        <path d="M1171 670h21v6l-1.500 1.500V712l1.500 1.500v5.500h-21v-5.500l1.500-1.500V677.500L1171 676z"/>
        <path d="M1148.300 539V580A26 26 0 1 1 1148.300 539M1134 534V585"/>
        <path d="M1300 461h19a10 9 0 0 0 19 0h19V559h-57z"/>
        <circle cx="1267" cy="657" r="27"/>
        <path d="M1259.500 644.500h6v25.500h-6zM1247 645h8M1251 640v10M1252 657.300h7M1275 657.300h7"/>
        <path d="M1272.300 645v25" stroke-width="5"/>
        <rect x="1416" y="608" width="47" height="25" rx="1.500"/>
        <path d="M1438 613v16M1443 613v16" stroke-width="3"/><path d="M1431 621.300h6M1444 621.300h6"/>
        <circle cx="1488.700" cy="522" r="68.300"/><circle cx="1488.700" cy="522" r="12.300"/><circle cx="1459" cy="485" r="12.300"/>
        <path class="bold" d="M1452 485h14M1459 478v14"/>
      </g>
      <path class="cross" d="M806 596.500h11m-5.500-5.500v11M887 596.500h11m-5.500-5.500v11M898 522.500h10m-5-5v10M974 522.500h11m-5.500-5.500v11M1004 546.500h10m-5-5v10M1012 564.500h10m-5-5v10M1108 489.500h11m-5.500-5.500v11M1219 489.500h11m-5.500-5.500v11M1134 479.500h11m-5.500-5.500v11M1245 479.500h11m-5.500-5.500v11M1121 528.500h11m-5.500-5.500v11M1139 528.500h11m-5.500-5.500v11M1296 458.500h11m-5.500-5.500v11M1318 475.500h11m-5.500-5.500v11M1416 497.500h11m-5.500-5.500v11M1521 565.500h11m-5.500-5.500v11M1413 606.500h11m-5.500-5.500v11M1413 648.500h11m-5.500-5.500v11M1288 643.500h11m-5.500-5.500v11M1189 670.500h11m-5.500-5.500v11M1172 679.500h10m-5-5v10M1193 672.500h10"/>
      <g class="st">
        <text transform="translate(811 595.500) rotate(-90)" textLength="19">G1</text>
        <text transform="translate(829 581.500) rotate(-90)" textLength="19">9V</text>
        <text transform="translate(891 595.500) rotate(-90)" textLength="41">AB9V</text>
        <text class="s" transform="translate(910 593.500) rotate(-90)" textLength="71" lengthAdjust="spacingAndGlyphs">22-27-2031-03</text>
        <text class="m" transform="translate(988 536) rotate(-90)" textLength="14">J1</text>
        <text transform="translate(952 520) rotate(-90)" textLength="9">3</text>
        <text transform="translate(951 611) rotate(-90)" textLength="9">1</text>
        <text class="m" x="1008" y="546" textLength="16">R1</text>
        <text class="m" x="1017" y="564" textLength="22">220</text>
        <text transform="translate(1112.500 489) rotate(-90)" textLength="19">R2</text>
        <text transform="translate(1138 478.500) rotate(-90)" textLength="44" lengthAdjust="spacingAndGlyphs">10000</text>
        <text transform="translate(1144 528) rotate(-90)" textLength="50">BC547</text>
        <text transform="translate(1125 528) rotate(-90)" textLength="18">T1</text>
        <text class="m" transform="translate(1129 546) rotate(-90)">1</text>
        <text class="m" transform="translate(1125 564) rotate(-90)">2</text>
        <text class="m" transform="translate(1129 579) rotate(-90)">3</text>
        <text transform="translate(1223.500 489) rotate(-90)" textLength="19">R3</text>
        <text transform="translate(1249 478.500) rotate(-90)" textLength="44" lengthAdjust="spacingAndGlyphs">47000</text>
        <text class="m" transform="translate(1186 699) rotate(-90)" textLength="21">150</text>
        <text class="m" transform="translate(1203 686) rotate(-90)" textLength="16">R4</text>
        <text x="1301" y="458" textLength="25">IC1</text>
        <text transform="translate(1334 523.500) rotate(-90)" textLength="48">NE555</text>
        <text transform="translate(1420.500 496) rotate(-90)" textLength="30">SG2</text>
        <text transform="translate(1525 565) rotate(-90)" textLength="68">F/CM12P</text>
        <text x="1417" y="606" textLength="21">C2</text>
        <text x="1417" y="647.500" textLength="50">0.01uF</text>
        <text x="1293" y="643" textLength="21">C1</text>
        <text class="xs" x="839" y="555" textLength="18">N$1</text><text class="xs" x="839" y="604" textLength="18">N$3</text>
        <text class="xxs" transform="translate(1494 491) rotate(-90)" textLength="12">N$4</text><text class="xxs" transform="translate(1494 565) rotate(-90)" textLength="12">N$3</text>
      </g>
      <path class="org" d="M839 571.500h20m-10-10v20M937 559.500h20m-10-10v20M1127 448.500h10m-5-5v10M1238 448.500h10m-5-5v10M1127 559.500h10m-5-5v10M1319 510.500h20m-10-10v20M1479 522.500h20m-10-10v20M1262 657.500h10m-5-5v10M1434 621.500h10m-5-5v10M1176 694.500h10m-5-5v10"/>
      <g class="net">
        <text x="891.500" y="392.300">N$1</text><text x="1027.500" y="392.300">N$1</text><text x="1175.500" y="392.300">N$1</text><text x="1230.500" y="392.300">N$1</text>
        <text x="1150.500" y="429.300">N$3</text><text x="1212.500" y="453.300">N$7</text><text x="1218.500" y="478.300">N$5</text><text x="1064.500" y="539.300">N$3</text><text x="978.500" y="589.300">N$3</text>
        <text x="891.500" y="712.300">N$3</text><text x="1055.500" y="712.300">N$3</text><text x="1175.500" y="712.300">N$3</text><text x="1295.500" y="712.300">N$3</text><text x="1181.500" y="687.300">N$3</text>
        <text x="1284" y="736.300">N$4</text><text x="1398.500" y="736.300">N$4</text><text x="1249.500" y="601.300">N$8</text><text x="1307.500" y="626.300">N$3</text><text x="1292.500" y="662.300">N$3</text><text x="1378.500" y="662.300">N$3</text><text x="1513.500" y="429.300">N$4</text>
        <text transform="translate(853.300 484.500) rotate(-90)">N$1</text><text transform="translate(951.300 472) rotate(-90)">N$1</text><text transform="translate(1038.300 502) rotate(-90)">N$3</text><text transform="translate(1038.300 569.500) rotate(-90)">N$3</text><text transform="translate(1038.300 632) rotate(-90)">N$3</text>
        <text transform="translate(853.300 656.500) rotate(-90)">N$3</text><text transform="translate(951.300 656.500) rotate(-90)">N$3</text><text transform="translate(1173.300 545.500) rotate(-90)">N$7</text><text transform="translate(1210.300 564.500) rotate(-90)">N$5</text><text transform="translate(1247.300 564.500) rotate(-90)">N$8</text><text transform="translate(1247.300 632.500) rotate(-90)">N$8</text>
        <text transform="translate(1370.300 447.500) rotate(-90)">N$1</text><text transform="translate(1395.300 601.500) rotate(-90)">N$6</text><text transform="translate(1493.300 601.500) rotate(-90)">N$3</text><text transform="translate(1493.300 473) rotate(-90)">N$4</text><text transform="translate(1567.300 576.500) rotate(-90)">N$4</text><text transform="translate(1456.300 663) rotate(-90)">N$3</text><text transform="translate(1329 519.500) rotate(-90)">N$1</text>
        <text transform="translate(1312 571) rotate(-45)">N$8</text><text transform="translate(1538 725) rotate(-45)">N$4</text><text transform="translate(1427 651) rotate(-45)">N$3</text>
      </g>
    </svg>
    <div class="sidetabs">
      <div class="st1"><svg width="17" height="16" viewBox="0 0 17 16"><rect width="17" height="16" rx="2" fill="#1d8d45"/><path d="M6 3v10M8.500 3v10M11 3v10" stroke="#e5d43b" stroke-width="1.300"/><path d="M4.500 5.500h8v5h-8z" fill="#1d8d45" stroke="#d9f0b0" stroke-width="1.300"/></svg><b>MANUFACTURING</b></div>
      <div class="st2"><svg width="17" height="17" viewBox="0 0 17 17"><rect width="17" height="17" rx="2" fill="#f5a21f"/><path d="M5 3h8v3H8.500v2H12v2.500H8.500V14H5z" fill="#4c4640"/><path d="M5 3l2.500 2v8L5 14z" fill="#8a7a65"/></svg><b>FUSION 360</b></div>
      <div class="st3"><svg width="17" height="17" viewBox="0 0 17 17"><rect width="17" height="17" rx="2" fill="#f5a21f"/><path d="M5 3h8v3H8.500v2H12v2.500H8.500V14H5z" fill="#4c4640"/><path d="M5 3l2.500 2v8L5 14z" fill="#8a7a65"/></svg><b>FUSION TEAM</b></div>
    </div>
    </div>
    <div class="vscroll"></div>
  </div>
  <div class="hscroll"></div>
</section>
</main>

<footer class="status"><span>Left-click &amp; drag to define group (or left-click to start defining a group polygon)</span><div class="bolt"><svg width="16" height="17" viewBox="0 0 16 17"><path d="M11 0L0 9h6l-2 8L16 7h-6z" fill="#14b04a"/></svg></div></footer>

<div class="taskbar">
  <div class="weather">
    <svg width="36" height="40" viewBox="24 1028 36 40"><rect x="26" y="1037" width="6" height="23" fill="#32b5ef"/><path d="M28 1043h4M28 1048h4M28 1053h4" stroke="#0b5a8d"/><path d="M45.500 1038c3 6 9.500 11 9.500 17a9.500 9.500 0 0 1-19 0c0-6 6.500-11 9.500-17z" fill="#29a9ea"/><circle cx="48.500" cy="1038" r="10" fill="#c42b1c"/><text x="45" y="1043" font-size="13" fill="#fff">1</text></svg>
    <p>29°C<br><em>Humid</em></p>
  </div>
  <svg class="winlogo" width="29" height="29" viewBox="0 0 29 29"><defs><linearGradient id="wg" x2="1" y2="1"><stop stop-color="#7fe0ff"/><stop offset="1" stop-color="#0a93f5"/></linearGradient></defs><path d="M0 1q0-1 1-1h13v14H0zM15 0h13q1 0 1 1v13H15zM0 15h14v14H1q-1 0-1-1zM15 15h14v13q0 1-1 1H15z" fill="url(#wg)"/></svg>
  <div class="search"><svg width="20" height="20" viewBox="0 0 20 20"><circle cx="9" cy="8" r="7" fill="none" stroke="#222" stroke-width="2"/><path d="M14 13l5 6" stroke="#222" stroke-width="2.200"/></svg><span>Search</span>
    <svg class="capy" width="64" height="32" viewBox="760 1036 64 32"><ellipse cx="793" cy="1060.500" rx="31" ry="7" fill="#2c9cc4"/><path d="M766 1056l-3-8M769 1056l1-10M773 1056l4-8" stroke="#7cb342" stroke-width="2.500"/><path d="M777 1063c-2-8 2-12 7-15 3-2 2-8 6-10 4-2 11-1 13 3 1 4 0 7-3 7 3 5 4 10 2 15-6 3-20 3-25 0z" fill="#a06f42"/><path d="M794 1048c4 4 4 10 3 16h5c2-5 1-10-2-16z" fill="#7a4e2b"/><circle cx="797" cy="1042" r="1" fill="#2b1a0c"/><path d="M789 1038l2-2 2 2z" fill="#5a3a1c"/><path d="M813 1063v-12M817 1063l3-10M809 1062l-2-8" stroke="#8cae3a" stroke-width="3"/><path d="M813 1051v-6M819 1054l1-5" stroke="#ffe082" stroke-width="3"/></svg>
  </div>
  <div class="apps">
    <span><svg width="31" height="30" viewBox="0 0 31 30"><rect x="0" y="9" width="23" height="21" rx="1" fill="#6a6a6a"/><rect x="8" y="0" width="23" height="21" rx="1" fill="#f2f2f2"/><path d="M8 9h15v12H8z" fill="#bdbdbd"/></svg></span>
    <span><svg width="30" height="30" viewBox="0 0 30 30"><path d="M15 .500a14 14 0 1 1-6 27.300L1 29.500l1.500-7A14 14 0 0 1 15 .500z" fill="#6a65d0"/><rect x="7" y="9" width="11" height="12" rx="2" fill="#fff"/><path d="M19 13l4-3v10l-4-3z" fill="#fff"/></svg></span>
    <span class="run"><svg width="31" height="29" viewBox="0 0 31 29"><path d="M1 2h9l4 4h-13z" fill="#dc9a0c"/><path d="M0 5h30q1 0 1 1v21q0 1-1 1H1q-1 0-1-1z" fill="#fdca3b"/><path d="M5 28v-6q0-2 2-2h17q2 0 2 2v6z" fill="#0f6fc5"/><path d="M10 24h11" stroke="#064a8e" stroke-width="1.500"/></svg></span>
    <span><svg width="30" height="30" viewBox="0 0 30 30"><defs><linearGradient id="eg" x2="1"><stop stop-color="#1e9de8"/><stop offset="1" stop-color="#5be070"/></linearGradient></defs><circle cx="15" cy="15" r="15" fill="#1272c4"/><path d="M30 13c1 4-1 8-4 9l5 2V12z" fill="#3c1727"/><path d="M0 14C1 5 8 0 15 0c9 0 15 6 15 13 0 5-4 7-8 7-3 0-4-1-4-2s2-2 1-5C17 8 6 7 0 14z" fill="url(#eg)"/><path d="M11 14c-5 6 0 15 10 14 3-1 6-3 8-6-8 4-19 1-18-8z" fill="#0b4a91"/></svg></span>
    <span><svg width="30" height="30" viewBox="0 0 30 30"><path d="M9 6V1h12v5" fill="none" stroke="#35a7e8" stroke-width="2"/><path d="M1 5h28v22q0 3-3 3H4q-3 0-3-3z" fill="#f0f0f0"/><path d="M9 11h5.500v5.500H9z" fill="#f25022"/><path d="M15.500 11H21v5.500h-5.500z" fill="#7fba00"/><path d="M9 17.500h5.500V23H9z" fill="#00a4ef"/><path d="M15.500 17.500H21V23h-5.500z" fill="#ffb900"/></svg></span>
    <span><svg width="30" height="30" viewBox="0 0 30 30"><defs><linearGradient id="dg" x2="1"><stop stop-color="#b90aff"/><stop offset=".3" stop-color="#ff1030"/><stop offset=".6" stop-color="#ff2010"/><stop offset="1" stop-color="#ffb000"/></linearGradient></defs><path d="M15 0l15 15-15 15L0 15z" fill="url(#dg)"/></svg></span>
    <span><svg class="help" width="36" height="38" viewBox="-4 -5 36 38"><circle cx="14" cy="15" r="14" fill="#0f8fd6" stroke="#fff" stroke-width="2"/><text x="7.500" y="24" font-size="25" font-weight="700" fill="#fff">?</text><circle cx="25" cy="4" r="10" fill="#ffb90c"/></svg></span>
    <span><svg width="28" height="30" viewBox="0 0 28 30"><path d="M0 0l14 7L28 0v23l-14 7-14-7z" fill="#c12530"/><path d="M6 9l8 5 8-5v11l-8 4-8-4z" fill="#3f1422"/></svg></span>
    <span class="run"><svg width="38" height="38" viewBox="-4 -5 38 38"><path d="M1.500 28.500l1.800-6.500A12.500 12.500 0 1 1 8 26.500z" fill="#2e2028" stroke="#25d366" stroke-width="2.800"/><path d="M9 8c2-2 3 0 4 3l-1 2c1 2 3 4 5 5l2-2c3 1 5 2 3 4-5 5-16-6-13-12z" fill="#25d366"/><circle cx="25" cy="4" r="9.700" fill="#4cb8ff"/><text x="21" y="9.500" font-size="14" fill="#111">1</text></svg></span>
    <span class="active"><svg width="20" height="30" viewBox="0 0 20 30"><path d="M0 0h19v7q-3-3-8-3v8h4q2 0 2-2v7q-1-1-3-1h-3v8q5 0 8-2v8H0z" fill="#d87f26"/><path d="M0 0l9 4v21l-9 5z" fill="#ee9b42"/><path d="M9 12l7 4H9zM9 25l10 5H5z" fill="#a85712"/></svg></span>
  </div>
  <svg class="tray" width="110" height="40" viewBox="1465 1030 110 40"><path d="M1467 1053l6-6 6 6" fill="none" stroke="#fff" stroke-width="1.800"/><path d="M1507 1056a4.500 4.500 0 0 1 0-8 6 6 0 0 1 11-1 5 5 0 0 1 2 9z" fill="#96989e"/><path d="M1506 1042l15 16" stroke="#fff" stroke-width="1.500"/><path d="M1544 1049a9 9 0 0 1 17-2M1561 1041v6h-6M1553 1058a9 9 0 0 1-8-5M1544 1059v-6h6" fill="none" stroke="#fff" stroke-width="1.600"/><circle cx="1558" cy="1054.500" r="5.200" fill="#ff9a0c"/></svg>
  <p class="lang">ENG<br>IN</p>
  <svg class="tray2" width="84" height="30" viewBox="1636 1035 84 30"><g fill="none" stroke="#fff" stroke-width="1.800"><path d="M1638.500 1048a13.500 13.500 0 0 1 19 0M1641.500 1051a9.500 9.500 0 0 1 13 0M1644.500 1054a5 5 0 0 1 7 0"/><path d="M1668 1047h4l5-5v16l-5-5h-4zM1680 1047q2 3 0 6" stroke-width="1.500"/><path d="M1683 1044q4 6 0 12M1685.500 1042q5 8 0 16" stroke="#5a606b" stroke-width="1.500"/><rect x="1699" y="1044" width="17" height="12" rx="3"/></g><circle cx="1648" cy="1056" r="1.800" fill="#fff"/><rect x="1701" y="1046" width="13" height="8" rx="1" fill="#fff"/><path d="M1717.500 1048v4" stroke="#fff" stroke-width="1.800"/></svg>
  <p class="clock">21:07<br>28-03-2024</p>
  <svg class="bell" width="16" height="19" viewBox="0 0 16 19"><path d="M8 0q6 0 6 6v5l2 4v1H0v-1l2-4V6q0-6 6-6zM5 17h6q-3 3-6 0z" fill="#8fe0ff"/></svg>
  <svg class="copilot" width="30" height="30" viewBox="0 0 30 30"><defs><linearGradient id="cg" y2="1" x2="0"><stop stop-color="#1b8cf0"/><stop offset=".6" stop-color="#39c0a0"/><stop offset="1" stop-color="#f0c020"/></linearGradient><linearGradient id="ch" y2="1" x2="0"><stop stop-color="#a64df0"/><stop offset="1" stop-color="#f25590"/></linearGradient></defs><path d="M7 0h11l3 2-7 17H4q-5-1-4-5L4 3q1-3 3-3z" fill="url(#cg)"/><path d="M18 0q3 0 3 4l2 3h-6z" fill="#1746c9"/><path d="M18 7h7q4 1 3 5l-3 10H12z" fill="url(#ch)"/><rect x="7" y="20" width="22" height="10" rx="2" fill="#ffc20c"/><text x="10" y="28.500" font-size="9" font-weight="700" fill="#222" textLength="17">PRE</text></svg>
</div>
</div>
</body>
</html>
```
FILE: styles.css
```css
* { box-sizing: border-box; }
body { margin: 0; font-family: "Open Sans", "Noto Sans", sans-serif; font-size: 13px; color: #3c3c3c; }
b, em, i { font-weight: inherit; font-style: normal; }
svg { display: block; }
.app { width: 1920px; height: 1080px; display: flex; flex-direction: column; overflow: hidden; background: #eee; }

.titlebar { height: 29px; display: flex; align-items: center; background: linear-gradient(90deg, #faeef1, #f9efef 46%, #faedf6 75%, #f2f0f8 92%, #f3f1f8); flex: none; padding-left: 3px; }
.app-icon { margin-right: 6px; flex: none; }
.title { width: 1732px; flex: none; font-size: 15px; line-height: 20px; padding-bottom: 2px; color: #111; white-space: nowrap; letter-spacing: -.33px; }
.winctl { flex: none; }
.menubar { height: 39px; flex: none; display: grid; grid-template-columns: 34px 36px 44px 42px 44px 57px 61px 62px 40px; align-items: center; padding: 0 0 3px 6px; background: #cbcbcb; border-bottom: 1px solid #b3b3b3; font-size: 15px; }
.menubar span { transform: scaleX(.9); transform-origin: left; }

.toolbar { height: 35px; flex: none; display: flex; align-items: center; background: #d9d9d9; border-bottom: 1px solid #999; padding-left: 7px; }
.handle { width: 5px; height: 27px; border: solid #b5b5b5; border-width: 0 1px; margin-right: 4.500px; flex: none; }
.h2 { margin: 0 15px 0 7.500px; height: 30px; }
.tb { width: 31px; height: 30px; display: flex; align-items: center; justify-content: center; flex: none; position: relative; }
.tb svg { width: 16px; height: 16px; }
.drop::after { content: ""; position: absolute; left: 24px; top: 24px; border: solid transparent; border-width: 5px 3px 0; border-top-color: #555; }
.sep { width: 9px; height: 30px; flex: none; border-left: 1px solid #b5b5b5; margin-left: 4px; margin-right: -4px; }
.lens { fill: #eee; stroke: #777; stroke-width: 1.200; }
.grip { stroke: #666; stroke-width: 2; }
.cmds { display: grid; grid-template-columns: 42.400px 63px 48.500px 59px 62.500px 45px 55px 52.500px 54.500px 46px 47.500px 54.500px 55px 51px 57px 49px 48px 44px 53px 39px 65px 35px 16px; font-size: 13.500px; align-items: center; }
.cmds span { justify-self: start; transform: scaleX(.89); transform-origin: left; line-height: 28px; white-space: nowrap; }
.cmds .on { background: #7c7c7c; border-radius: 2px; padding: 0 9px; margin-left: -8px; }
.cmds .more { font-size: 18px; line-height: 20px; }

.toolbar2 { height: 37px; flex: none; display: flex; align-items: center; border-bottom: 1px solid #d5d5d5; padding: 0 0 0 7px; }
.toolbar2 .tb { width: 29px; }
.toolbar2 .pressed { width: 27px; height: 27px; background: #d9d9d9; border-radius: 3px; margin-left: 1px; }
.toolbar2 .sep { margin-left: 5px; margin-right: 2px; }
.toolbar2 label { width: 45px; transform: scaleX(.88); transform-origin: left; font-size: 14px; }
.combo { width: 143px; height: 26px; border: 1px solid #888; background: #fff; display: flex; align-items: center; padding-left: 4px; }
.combo i { width: 16px; height: 16px; background: #a00a0a; margin-right: 6px; }
.combo span { width: 103px; letter-spacing: -.9px; font-size: 13.500px; word-spacing: -1px; }
.combo b, .cmdline b { border: solid transparent; border-width: 5px 3px 0; border-top-color: #555; }

.main { height: 858px; flex: none; display: flex; }
.palette { width: 62px; flex: none; border: 1px solid #d5d5d5; border-top: 0; padding-top: 7px; }
.grip-lines { height: 5px; width: 44px; margin: 0 0 5px 8px; border: solid #c5c5c5; border-width: 1px 0; }
.prow { height: 29px; display: grid; grid-template-columns: 29px 29px; padding-top: 6px; position: relative; }
.prow svg { width: 16px; height: 16px; margin-left: 7px; overflow: visible; }
.prow .sel { width: 25px; height: 25px; padding: 4px 4px 5px 5px; margin: -4px 0 0 3px; background: #d9d9d9; border-radius: 2px; }
.palette hr { border: 0; height: 1px; background: #c5c5c5; margin: 0 1px 1px; }
.prow:has(.dd)::after { content: ""; position: absolute; left: 51px; top: 23px; border: solid transparent; border-width: 5px 3px 0; border-top-color: #555; }
.prow:has(.dd:first-child)::after { left: 22px; }
.ic { font: 700 7.500px "Liberation Sans", sans-serif; fill: #333; }
.ic.dim { fill: #bbb; }
.ic.mid { fill: #444; font: 600 9.500px "Open Sans", sans-serif; }

.panel { width: 352px; flex: none; display: flex; flex-direction: column; }
.tabs { height: 30px; display: flex; align-items: stretch; flex: none; padding-left: 2px; font-size: 14px; color: #8c8c8c; }
.tabs span { background: #d8d8d8; border-radius: 3px 3px 0 0; margin-right: 4px; display: flex; align-items: center; white-space: nowrap; padding: 0 0 1px 7.500px; height: 29px; }
.tabs b { transform: scaleX(.885); transform-origin: left; }
.t1 { width: 108px; } .t2 { width: 71px; } .t3 { width: 104px; }
.tabs .active { background: none; color: #0896d9; border-bottom: 3px solid #0896d9; height: 31px; border-radius: 0; z-index: 1; }
.tabs .active b { transform: scaleX(.91); }
.panel-body { flex: 1; border: 1px solid #878c94; border-right-width: 2px; min-height: 0; }
h4 { margin: 0; font-weight: 400; font-size: 13px; line-height: 17px; transform: scaleX(.95); transform-origin: left; }
.types { height: 24px; }
.layers { height: 30px; padding-top: 6px; }
.list { border: 1px solid #878c94; background: #fff; padding: 1px; display: flex; width: 350px; }
.list1 { height: 250px; }
.list2 { height: 367px; margin-top: 6px; }
ul { list-style: none; margin: 0; padding: 0 0 0 3px; width: 330px; background: #0896d9; overflow: hidden; color: #f2faff; }
li { height: 21px; display: flex; align-items: center; font-size: 13px; letter-spacing: .2px; }
li:first-child { margin-top: -1px; }
li svg, .sw { width: 16px; height: 16px; margin-right: 6px; }
li b { transform: scaleX(.89); transform-origin: left; white-space: nowrap; }
.scroll { flex: 1; padding-left: 5px; background: repeating-conic-gradient(#fff 0 25%, #ececec 0 50%) 0 0 / 2px 2px; }
.scroll i { display: block; width: 6px; background: #808080; border-radius: 3px; height: 180px; }
.list2 .scroll i { height: 75px; }
.allbox { height: 122px; border: 1px solid #878c94; background: #fff; padding: 1px 4px; width: 350px; }
.reset { display: block; width: 51px; height: 27px; margin: 0 0 0 299px; border: 1px solid #777; border-radius: 4px; background: #fff; font: 13px "Open Sans", sans-serif; color: #3c3c3c; padding: 0; letter-spacing: -.1px; }
.l1 { background: #722a47; } .l16 { background: #0378b8; } .l17 { background: #219e90; border: 1px solid #2cb59b; } .l19 { background: #6f9560; border: 1px solid #8ea85c; } .l20 { background: #83946a; border: 1px solid #a4a35c; } .l21 { background: #7096b8; border: 1px solid #8fb0cf; }
.l39 { background: radial-gradient(#722a47 30%, transparent 32%) 0 0 / 3px 3px #04223f; border: 1px solid #722a47; }
.l40 { background: radial-gradient(#0378b8 30%, transparent 32%) 0 0 / 3px 3px #04223f; }
.l41 { background: radial-gradient(#722a47 22%, transparent 24%) 0 0 / 4px 4px #04223f; border: 1px solid #722a47; }
.l42 { background: radial-gradient(#0378b8 22%, transparent 24%) 0 0 / 4px 4px #04223f; }
.l43 { background: radial-gradient(#219e90 22%, transparent 24%) 0 0 / 4px 4px #04223f; border: 1px solid #219e90; }

.work { flex: 1; border-left: 4px solid #d9d9d9; display: flex; flex-direction: column; }
.cmdrow { height: 34px; flex: none; display: flex; padding: 4px 4px 4px 7px; }
.coord { width: 131px; line-height: 26px; font-size: 13.500px; letter-spacing: -.52px; white-space: nowrap; }
.cmdline { flex: 1; border: 1px solid #0896d9; background: #fff; display: flex; justify-content: flex-end; align-items: center; padding-right: 5px; }
.canvas-row { display: flex; height: 808px; }
.canvas { width: 1486px; background: #282828; display: grid; }
.canvas > * { grid-area: 1 / 1; }
.vscroll { width: 6px; margin-left: 5px; background: #808080; border-radius: 3px; }
.hscroll { height: 6px; width: 1486px; margin-top: 5px; background: #808080; border-radius: 3px; }
.sidetabs { justify-self: end; width: 30px; padding-top: 9px; display: flex; flex-direction: column; gap: 15px; }
.sidetabs div { width: 27px; height: 146px; background: #454545; display: flex; flex-direction: column; align-items: center; color: #f4f4f4; font: 600 12px "Open Sans", sans-serif; }
.sidetabs b { writing-mode: vertical-rl; white-space: nowrap; margin-top: 6px; letter-spacing: -.1px; }
.st1 { padding-top: 8px; } .st2 { padding-top: 19px; } .st3 { padding-top: 19px; }
.sidetabs .st2 b, .sidetabs .st3 b { margin-top: 9px; }

.trace { fill: none; stroke: #0678ad; stroke-width: 13; stroke-linejoin: round; stroke-linecap: round; }
.oct, .slot { fill: #2fae7b; }
.slothi { fill: none; stroke: #36c89c; stroke-width: 12; stroke-linecap: round; }
.ring { fill: #33c295; stroke: #48d8a8; stroke-width: 1.500; }
.via { fill: #0678ad; stroke: #34cb9e; stroke-width: 3.600; }
.drill { fill: #0675ad; }
.lead { fill: none; stroke: #b4b4b4; stroke-width: 6; }
.lead .thin { stroke-width: 5; }
.silk { fill: none; stroke: #aeb1b3; stroke-width: 1.700; }
.silk .bold { stroke-width: 3; }
.cross { stroke: #aaa; fill: none; }
.org { stroke: #9faf20; fill: none; }
.st { fill: #b8bcbe; stroke: #b8bcbe; stroke-width: .25; font: 200 15.500px "DejaVu Sans", sans-serif; }
.st .m { font-size: 13px; } .st .s { font-size: 11px; } .st .xs { font-size: 9px; } .st .xxs { font-size: 7px; }
.net { fill: #b9bf36; stroke: #b9bf36; stroke-width: .3; font: 200 14px "DejaVu Sans", sans-serif; letter-spacing: -.9px; }

.status { height: 23px; flex: none; border-top: 1px solid #888; border-bottom: 1px solid #555; display: flex; align-items: center; padding: 0 0 1px 5px; font-size: 13px; }
.status span { transform: scaleX(.94); transform-origin: left; width: 1882px; white-space: nowrap; letter-spacing: .1px; flex: none; }
.bolt { border: solid #ccc; border-width: 0 1px; width: 23px; height: 18px; padding-left: 4px; flex: none; }

.taskbar { height: 59px; flex: none; display: flex; align-items: center; color: #fff; font-size: 15px; background: linear-gradient(90deg, #1b2430, #1f1e2b 18%, #251d2a 30%, #321a2b 42%, #3c1628 52%, #4a1420 59%, #451427 66%, #3f1434 72%, #2d1a30 76%, #20212f 80%, #1b2430); }
.taskbar p { margin: 0; line-height: 21px; padding-bottom: 2px; }
.weather { width: 508px; flex: none; padding-left: 24px; display: flex; align-items: center; gap: 4px; letter-spacing: -.4px; }
.weather em { color: #c8c8cc; letter-spacing: -.3px; }
.search { width: 273px; height: 38px; flex: none; border-radius: 19px; background: #f3f1f3; margin-left: 18px; margin-right: 3.500px; display: flex; align-items: center; padding-left: 14px; color: #555; }
.search span { width: 160px; margin-left: 11px; }
.apps { display: flex; flex: none; }
.apps span { width: 55px; height: 50px; display: flex; align-items: center; justify-content: center; position: relative; }
.apps .run::after, .apps .active::after { content: ""; position: absolute; left: 24px; bottom: 1px; width: 7px; height: 4px; border-radius: 2px; background: #a79aa3; }
.apps .active { background: #ffffff18; border-radius: 6px; width: 48px; margin-left: 3.500px; border: 1px solid #ffffff14; }
.apps .active::after { left: 13px; width: 20px; bottom: 0; background: #4cc2ff; }
.tray { margin-left: 87px; }
.lang { width: 52px; text-align: center; }
.tray2 { margin-left: 9px; }
.clock { width: 96px; text-align: right; letter-spacing: -.15px; white-space: nowrap; }
.bell { margin-left: 11px; }
.copilot { margin-left: 23px; }
.tray, .lang, .tray2, .clock, .bell, .copilot { flex: none; }
.tray + .lang { letter-spacing: -.2px; }
.clock { margin-left: 0; padding-right: 1px; }
```
